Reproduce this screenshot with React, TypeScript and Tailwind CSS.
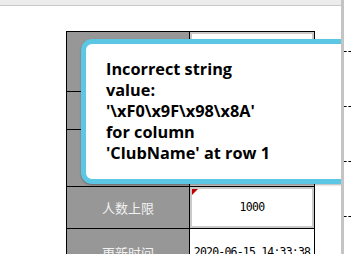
import React from 'react';

const rows = [
  { label: '', value: '', h: 'h-[60px]', input: true },
  { label: '', value: '', h: 'h-[38px]', input: true },
  { label: '', value: '', h: 'h-[57px]', input: true },
  { label: '人数上限', value: '1000', h: 'h-[42px]', input: true, flag: true },
  { label: '更新时间', value: '2020-06-15 14:33:38', h: 'h-[48px]', input: false },
];

const mono = { fontFamily: '"DejaVu Sans Mono", monospace' };

export default function App() {
  return (
    <div className="w-[351px] h-[254px] flex bg-white overflow-hidden">
      {/* main area */}
      <div className="relative w-[341px] h-full flex flex-col overflow-hidden">
        <div className="h-[6px] bg-[#ececec] border-b border-[#c8c8c8] shrink-0" />

        <div className="pl-[66px] pt-[25px]">
          {/* table */}
          <div className="w-[249px] border-t border-l border-r border-black">
            {rows.map((row, i) => (
              <div key={i} className={`flex border-b border-black ${row.h}`}>
                <div
                  className="w-[123px] bg-[#979797] border-r border-black flex items-center justify-center text-[13px] text-[#f2f2f2]"
                  style={{ fontFamily: '"Noto Sans CJK SC", sans-serif' }}
                >
                  {row.label}
                </div>
                <div className="flex-1 flex">
                  {row.input ? (
                    <div className="relative flex-1 border-2 border-[#c9c9c9] bg-white flex items-center justify-center">
                      {row.flag && (
                        <div className="absolute left-0 top-0 w-0 h-0 border-t-[6px] border-r-[6px] border-t-[#c00000] border-r-transparent" />
                      )}
                      <span className="text-[11.5px] text-black tracking-[-0.7px]" style={mono}>
                        {row.value}
                      </span>
                    </div>
                  ) : (
                    <div className="flex-1 flex items-center justify-center">
                      <span className="text-[11.5px] text-black tracking-[-0.8px]" style={mono}>
                        {row.value}
                      </span>
                    </div>
                  )}
                </div>
              </div>
            ))}
          </div>
        </div>

        {/* error popup */}
        <div className="absolute left-[81px] top-[39px] w-[290px] h-[145px] bg-white border-[5px] border-[#5bc7e5] rounded-[11px] shadow-[0_1px_2px_rgba(0,0,0,0.3)] pl-[20px] pt-[15px]">
          <p
            className="text-[16.3px] leading-[21px] font-bold text-black"
            style={{ fontFamily: '"Open Sans", sans-serif' }}
          >
            Incorrect string
            <br />
            value:
            <br />
            '\xF0\x9F\x98\x8A'
            <br />
            for column
            <br />
            'ClubName' at row 1
          </p>
        </div>
      </div>

      {/* right strip */}
      <div className="w-[10px] h-full border-l-[3px] border-[#c4c4c4] bg-white flex flex-col pt-[51px] gap-[54px]">
        {[0, 1, 2, 3].map((i) => (
          <div key={i} className="h-px w-full border-t border-dashed border-black" />
        ))}
      </div>
    </div>
  );
}
